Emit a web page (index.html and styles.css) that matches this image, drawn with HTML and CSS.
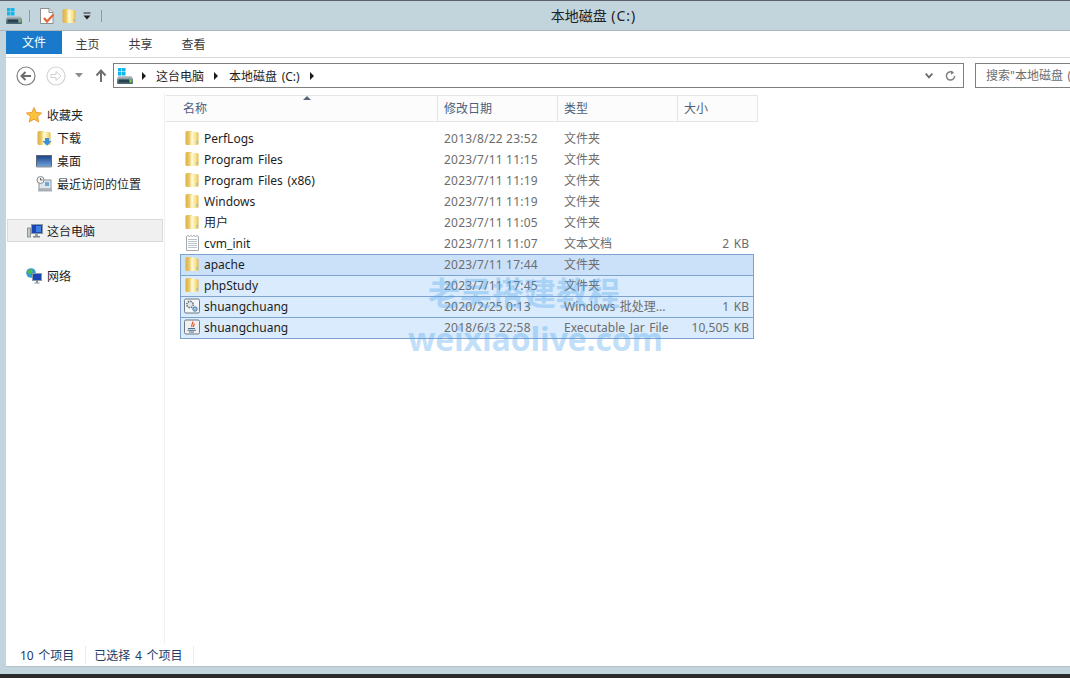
FILE: index.html
```html
<!DOCTYPE html>
<html lang="zh-CN">
<head>
    <meta charset="UTF-8">
    <title>本地磁盘 (C:)</title>
    <link rel="stylesheet" href="styles.css">
</head>
<body>
    <svg class="defs" width="0" height="0">
        <defs>
            <linearGradient id="foldLeft" x1="0" y1="0" x2="1" y2="0">
                <stop offset="0" stop-color="#dcae42"/>
                <stop offset="1" stop-color="#f6de86"/>
            </linearGradient>
            <linearGradient id="foldRight" x1="0" y1="0" x2="1" y2="0">
                <stop offset="0" stop-color="#fff6c4"/>
                <stop offset="0.6" stop-color="#f8e28c"/>
                <stop offset="1" stop-color="#e0b850"/>
            </linearGradient>
            <linearGradient id="driveBody" x1="0" y1="0" x2="0" y2="1">
                <stop offset="0" stop-color="#c6ced2"/>
                <stop offset="0.35" stop-color="#8a9aa2"/>
                <stop offset="1" stop-color="#46606e"/>
            </linearGradient>
            <linearGradient id="screen" x1="0" y1="0" x2="0" y2="1">
                <stop offset="0" stop-color="#1d3f86"/>
                <stop offset="1" stop-color="#6ea4df"/>
            </linearGradient>
            <symbol id="folder" viewBox="0 0 16 16">
                <path d="M1.500 2.500 Q1.500 1 3 1 H8 V15 H3 Q1.500 15 1.500 13.500 Z" fill="url(#foldLeft)"/>
                <path d="M8 2 H13 Q14.500 2 14.500 3.500 V13.500 Q14.500 15 13 15 H8 Z" fill="url(#foldRight)"/>
                <path d="M6.500 2 L9.500 1 V15 H6.500 Z" fill="#fdf6d2" opacity="0.8"/>
                <path d="M12.500 11 h1 v2.500 h-1 z" fill="#7fb2dc"/>
            </symbol>
            <symbol id="drive" viewBox="0 0 16 16">
                <rect x="1" y="0" width="3.500" height="3.500" fill="#10b6f0"/>
                <rect x="5" y="0" width="3.500" height="3.500" fill="#10b6f0"/>
                <rect x="1" y="4" width="3.500" height="3.500" fill="#10b6f0"/>
                <rect x="5" y="4" width="3.500" height="3.500" fill="#10b6f0"/>
                <path d="M1.500 8 H14.500 L16 11 V15 Q16 16 15 16 H1 Q0 16 0 15 V11 Z" fill="url(#driveBody)"/>
                <rect x="1.500" y="11.500" width="10.500" height="3" fill="#27434f"/>
                <rect x="13" y="11.500" width="1.500" height="3" fill="#6fd04a"/>
            </symbol>
        </defs>
    </svg>

    <div class="titlebar">
        <div class="quick">
            <svg class="ico16"><use href="#drive"/></svg>
            <span class="sep"></span>
            <svg class="ico16 q-prop" viewBox="0 0 16 16">
                <path d="M1.500 0.500 H10 L14 4.500 V15.500 H1.500 Z" fill="#fff" stroke="#8d8d8d"/>
                <path d="M10 0.500 V4.500 H14" fill="#e4e4e4" stroke="#8d8d8d"/>
                <path d="M5 10 L8 13.500 L14.500 6.500" fill="none" stroke="#e4693a" stroke-width="2.200"/>
            </svg>
            <svg class="ico16"><use href="#folder"/></svg>
            <svg class="q-arrow" viewBox="0 0 8 8" width="8" height="8">
                <rect x="0.500" y="0.500" width="7" height="1" fill="#222"/>
                <path d="M0.500 3.500 H7.500 L4 7.500 Z" fill="#222"/>
            </svg>
            <span class="sep"></span>
        </div>
        <div class="title">本地磁盘 <span class="title-drive">(C:)</span></div>
    </div>

    <div class="window">
        <div class="tabs">
            <div class="tab tab-file">文件</div>
            <div class="tab">主页</div>
            <div class="tab">共享</div>
            <div class="tab">查看</div>
        </div>

        <div class="navbar">
            <div class="nav-buttons">
                <svg class="nav-round" viewBox="0 0 20 20" width="20" height="20">
                    <circle cx="10" cy="10" r="9" fill="#fff" stroke="#7f7f7f" stroke-width="1.200"/>
                    <path d="M15 10 H6 M9.500 6 L5.500 10 L9.500 14" fill="none" stroke="#6d6d6d" stroke-width="2"/>
                </svg>
                <svg class="nav-round" viewBox="0 0 20 20" width="20" height="20">
                    <circle cx="10" cy="10" r="9" fill="#fff" stroke="#d4d4d4" stroke-width="1.200"/>
                    <path d="M5 8.500 H10 V5.500 L15 10 L10 14.500 V11.500 H5 Z" fill="#fff" stroke="#d0d0d0"/>
                </svg>
                <svg class="nav-drop" viewBox="0 0 8 5" width="8" height="5"><path d="M0 0 H8 L4 4.500 Z" fill="#8c8c8c"/></svg>
                <svg class="nav-up" viewBox="0 0 12 14" width="12" height="14">
                    <path d="M6 13 V2 M1.500 6.500 L6 1.500 L10.500 6.500" fill="none" stroke="#6f6f6f" stroke-width="2"/>
                </svg>
            </div>
            <div class="address">
                <svg class="ico16"><use href="#drive"/></svg>
                <span class="crumb-arrow"></span>
                <span class="crumb">这台电脑</span>
                <span class="crumb-arrow"></span>
                <span class="crumb">本地磁盘 (C:)</span>
                <span class="crumb-arrow"></span>
                <span class="address-fill"></span>
                <svg class="addr-chev" viewBox="0 0 8 6" width="8" height="6"><path d="M0.700 0.700 L4 4.300 L7.300 0.700" fill="none" stroke="#6a6a6a" stroke-width="1.800"/></svg>
                <svg class="addr-refresh" viewBox="0 0 12 12" width="11" height="12">
                    <path d="M8.500 2.200 A4.500 4.500 0 1 0 10.500 6" fill="none" stroke="#808080" stroke-width="1.600"/>
                    <path d="M6.500 0 L10 2.400 L6.500 4.500 Z" fill="#808080"/>
                </svg>
            </div>
            <div class="search">搜索"本地磁盘 (C:)"</div>
        </div>

        <div class="main">
            <aside class="sidebar">
                <div class="side-group">
                    <div class="side-item">
                        <svg class="ico16" viewBox="0 0 16 16">
                            <path d="M8 0.500 L10.200 5.500 L15.700 6 L11.500 9.600 L12.800 15 L8 12.200 L3.200 15 L4.500 9.600 L0.300 6 L5.800 5.500 Z" fill="#fbc23d" stroke="#e78a25" stroke-width="0.800"/>
                        </svg>
                        <span>收藏夹</span>
                    </div>
                    <div class="side-item side-sub">
                        <svg class="ico16" viewBox="0 0 16 16">
                            <use href="#folder"/>
                            <path d="M9 8 H13 V11 H15.500 L11 15.800 L6.500 11 H9 Z" fill="#3a8fd9"/>
                        </svg>
                        <span>下载</span>
                    </div>
                    <div class="side-item side-sub">
                        <svg class="ico16" viewBox="0 0 16 16">
                            <rect x="0.500" y="2.500" width="15" height="11" fill="url(#screen)" stroke="#5d6a75"/>
                            <rect x="0.500" y="13" width="15" height="1.500" fill="#8a96a0"/>
                        </svg>
                        <span>桌面</span>
                    </div>
                    <div class="side-item side-sub">
                        <svg class="ico16" viewBox="0 0 16 16">
                            <rect x="3" y="4" width="12" height="9" fill="#dfe6ea" stroke="#8a949b"/>
                            <rect x="9" y="6" width="4" height="4" fill="#6fa6d6"/>
                            <rect x="2" y="13" width="14" height="2.500" fill="#a9b1b6"/>
                            <circle cx="4.500" cy="4" r="3.500" fill="#f3f3f3" stroke="#8a8a8a"/>
                            <path d="M4.500 2 V4 H6.500" fill="none" stroke="#666"/>
                        </svg>
                        <span>最近访问的位置</span>
                    </div>
                </div>
                <div class="side-item side-pc">
                    <svg class="ico16" viewBox="0 0 16 16">
                        <rect x="0.500" y="5" width="3" height="9" fill="#c2c8c6" stroke="#6f7a72" stroke-width="0.700"/>
                        <rect x="4.500" y="1.500" width="11" height="9" fill="#1a45b5" stroke="#8b9aa3"/>
                        <rect x="9" y="3" width="5" height="6" fill="#3e7fe0"/>
                        <rect x="8" y="11" width="3" height="2" fill="#9aa5aa"/>
                        <rect x="6" y="13" width="7" height="1.500" fill="#7d888e"/>
                    </svg>
                    <span>这台电脑</span>
                </div>
                <div class="side-item side-net">
                    <svg class="ico16" viewBox="0 0 16 16">
                        <circle cx="5" cy="5" r="4.800" fill="#2f9adf"/>
                        <path d="M2 2.500 L5 1 L7 3 L4.500 6.500 L2 5 Z M6 7 L9 6.500 L8.500 9.500 L6.500 9.500 Z" fill="#57b947"/>
                        <rect x="6.500" y="5.500" width="9" height="7" fill="#1a45b5" stroke="#8b9aa3"/>
                        <rect x="10" y="12.500" width="2" height="2" fill="#7d888e"/>
                        <rect x="8.500" y="14.500" width="5" height="1" fill="#7d888e"/>
                    </svg>
                    <span>网络</span>
                </div>
            </aside>

            <section class="files">
                <div class="sort-mark"></div>
                <div class="col-head">
                    <div class="col col-name">名称</div>
                    <div class="col col-date">修改日期</div>
                    <div class="col col-type">类型</div>
                    <div class="col col-size">大小</div>
                </div>
                <div class="rows">
                    <div class="row"><svg class="ico16"><use href="#folder"/></svg><span class="c-name">PerfLogs</span><span class="c-date">2013/8/22 23:52</span><span class="c-type">文件夹</span><span class="c-size"></span></div>
                    <div class="row"><svg class="ico16"><use href="#folder"/></svg><span class="c-name">Program Files</span><span class="c-date">2023/7/11 11:15</span><span class="c-type">文件夹</span><span class="c-size"></span></div>
                    <div class="row"><svg class="ico16"><use href="#folder"/></svg><span class="c-name">Program Files (x86)</span><span class="c-date">2023/7/11 11:19</span><span class="c-type">文件夹</span><span class="c-size"></span></div>
                    <div class="row"><svg class="ico16"><use href="#folder"/></svg><span class="c-name">Windows</span><span class="c-date">2023/7/11 11:19</span><span class="c-type">文件夹</span><span class="c-size"></span></div>
                    <div class="row"><svg class="ico16"><use href="#folder"/></svg><span class="c-name">用户</span><span class="c-date">2023/7/11 11:05</span><span class="c-type">文件夹</span><span class="c-size"></span></div>
                    <div class="row">
                        <svg class="ico16" viewBox="0 0 16 16">
                            <path d="M2.500 1.500 L4 0.500 L5.500 1.500 L7 0.500 L8.500 1.500 L10 0.500 L11.500 1.500 L13 0.500 L14.500 1.500 V15.500 H2.500 Z" fill="#fff" stroke="#a3a8ac"/>
                            <path d="M4 4.500 H13 M4 6.500 H13 M4 8.500 H13 M4 10.500 H13 M4 12.500 H13" stroke="#b9c3cb"/>
                        </svg>
                        <span class="c-name">cvm_init</span><span class="c-date">2023/7/11 11:07</span><span class="c-type">文本文档</span><span class="c-size">2 KB</span>
                    </div>
                    <div class="row sel sel-hot"><svg class="ico16"><use href="#folder"/></svg><span class="c-name">apache</span><span class="c-date">2023/7/11 17:44</span><span class="c-type">文件夹</span><span class="c-size"></span></div>
                    <div class="row sel"><svg class="ico16"><use href="#folder"/></svg><span class="c-name">phpStudy</span><span class="c-date">2023/7/11 17:45</span><span class="c-type">文件夹</span><span class="c-size"></span></div>
                    <div class="row sel">
                        <svg class="ico16" viewBox="0 0 16 16">
                            <rect x="0.500" y="1" width="15" height="14" rx="1.500" fill="#f4f6f8" stroke="#6f7a84"/>
                            <circle cx="6" cy="6.500" r="3.200" fill="#dfe6ea" stroke="#68747e" stroke-width="1.600" stroke-dasharray="1.500 1"/>
                            <circle cx="11" cy="11" r="2.200" fill="#9fc4e6" stroke="#4d7ba6"/>
                        </svg>
                        <span class="c-name">shuangchuang</span><span class="c-date">2020/2/25 0:13</span><span class="c-type">Windows 批处理...</span><span class="c-size">1 KB</span>
                    </div>
                    <div class="row sel">
                        <svg class="ico16" viewBox="0 0 16 16">
                            <rect x="0.500" y="1" width="15" height="14" rx="1.500" fill="#eef0f2" stroke="#6f7a84"/>
                            <path d="M8.500 2.500 C10 4.500 6.500 5 8 8 M10 4.500 C11 6 9 6 9.500 8" fill="none" stroke="#e0582a" stroke-width="1.200"/>
                            <path d="M4 9.500 H11 M3.500 11.300 H12 M5 13 H10" stroke="#4d6f92" stroke-width="1.100"/>
                        </svg>
                        <span class="c-name">shuangchuang</span><span class="c-date">2018/6/3 22:58</span><span class="c-type">Executable Jar File</span><span class="c-size">10,505 KB</span>
                    </div>
                </div>
                <div class="watermark">
                    <div class="wm-cn">老吴搭建教程</div>
                    <div class="wm-en">weixiaolive.com</div>
                </div>
            </section>
        </div>

        <div class="statusbar">
            <span class="status-cell">10 个项目</span>
            <span class="status-cell">已选择 4 个项目</span>
        </div>
    </div>
    <div class="taskbar"></div>
</body>
</html>
```

FILE: styles.css
```css
html, body {
    margin: 0;
    padding: 0;
    height: 100%;
    overflow: hidden;
}
body {
    width: 1070px;
    height: 678px;
    display: flex;
    flex-direction: column;
    background-color: #c3d5dc;
    font-family: "Noto Sans", "Noto Sans CJK SC", sans-serif;
    font-size: 12px;
    word-spacing: 1.5px;
    color: #1e1e1e;
}
.defs {
    position: absolute;
}
.ico16 {
    width: 16px;
    height: 16px;
    flex: none;
}

/* title bar */
.titlebar {
    height: 31px;
    flex: none;
    border-top: 1px solid #5c6068;
    box-sizing: border-box;
    border-bottom: 1px solid #a9b7bd;
    display: flex;
    align-items: center;
    position: relative;
}
.quick {
    display: flex;
    align-items: center;
    padding-left: 6px;
}
.quick .sep {
    width: 1px;
    height: 12px;
    background-color: #8d9a9f;
    margin: 0 9px 0 7px;
}
.q-prop {
    margin-right: 6px;
}
.q-arrow {
    margin: 1px 3px 0 6px;
}
.title {
    position: absolute;
    left: 0;
    right: 0;
    padding-left: 117px;
    padding-bottom: 2px;
    text-align: center;
    font-size: 14px;
    word-spacing: 1px;
    color: #202020;
}
.title-drive {
    letter-spacing: 1px;
}

/* window */
.window {
    flex: 1;
    margin-left: 6px;
    margin-bottom: 7px;
    background-color: #fff;
    display: flex;
    flex-direction: column;
    min-height: 0;
    border-bottom: 1px solid #b8c0c4;
}
.tabs {
    height: 26px;
    flex: none;
    display: flex;
    border-bottom: 1px solid #dadada;
}
.tab {
    width: 53px;
    height: 23px;
    line-height: 27px;
    text-align: center;
    color: #3b3b3b;
}
.tab-file {
    width: 56px;
    line-height: 23px;
    margin-right: -1px;
    background-color: #1979ca;
    color: #fff;
}
.navbar {
    height: 35px;
    flex: none;
    display: flex;
    align-items: center;
}
.nav-buttons {
    display: flex;
    align-items: center;
    width: 107px;
    flex: none;
    padding-left: 10px;
    box-sizing: border-box;
}
.nav-round {
    margin-right: 10px;
}
.nav-drop {
    margin: 0 12px 0 -1px;
}
.address {
    flex: 1;
    height: 25px;
    box-sizing: border-box;
    border: 1px solid #7f7f7f;
    display: flex;
    align-items: center;
    padding: 0 7px 0 3px;
    color: #1e1e1e;
}
.crumb-arrow {
    width: 0;
    height: 0;
    border-left: 4px solid #1a1a1a;
    border-top: 4px solid transparent;
    border-bottom: 4px solid transparent;
    margin: 0 10px 0 9px;
}
.crumb + .crumb-arrow {
    margin: 0 11px 0 10px;
}
.address-fill {
    flex: 1;
}
.addr-chev {
    margin-right: 12px;
}
.search {
    width: 95px;
    height: 25px;
    line-height: 23px;
    box-sizing: border-box;
    flex: none;
    margin-left: 11px;
    border: 1px solid #7f7f7f;
    border-right: none;
    padding-left: 10px;
    color: #6d6d6d;
    white-space: nowrap;
    overflow: hidden;
}

/* sidebar */
.main {
    flex: 1;
    display: flex;
    min-height: 0;
}
.sidebar {
    width: 159px;
    flex: none;
    box-sizing: border-box;
    border-right: 1px solid #f0f0f0;
    padding-top: 10px;
    height: 551px;
}
.side-group {
    margin-bottom: 24px;
}
.side-item {
    height: 23px;
    display: flex;
    align-items: center;
    padding-left: 20px;
    gap: 5px;
    white-space: nowrap;
}
.side-sub {
    padding-left: 30px;
}
.side-pc {
    margin-left: 1px;
    width: 156px;
    padding-left: 19px;
    gap: 4px;
    box-sizing: border-box;
    background-color: #f0f0f0;
    border: 1px solid #d9d9d9;
}
.side-net {
    margin-top: 22px;
}

/* file list */
.files {
    flex: 1;
    position: relative;
    padding-top: 2px;
}
.sort-mark {
    position: absolute;
    left: 138px;
    top: 3px;
    width: 0;
    height: 0;
    border-left: 4px solid transparent;
    border-right: 4px solid transparent;
    border-bottom: 4px solid #56687a;
}
.col-head {
    margin-left: 1px;
    width: 592px;
    height: 27px;
    box-sizing: border-box;
    background-color: #fcfcfc;
    border-top: 1px solid #e5e5e5;
    border-bottom: 1px solid #e5e5e5;
    display: flex;
    color: #4c607a;
}
.col {
    box-sizing: border-box;
    line-height: 25px;
    padding-left: 6px;
    border-right: 1px solid #e5e5e5;
}
.col-name { width: 272px; padding-left: 17px; }
.col-date { width: 120px; }
.col-type { width: 120px; }
.col-size { width: 80px; }
.rows {
    padding-top: 6px;
    padding-left: 15px;
    width: 574px;
}
.row {
    height: 21px;
    display: flex;
    align-items: center;
    box-sizing: border-box;
    white-space: nowrap;
    padding-left: 3px;
    padding-bottom: 2px;
    border: 1px solid transparent;
    border-bottom-width: 0;
}
.row .ico16 {
    margin-right: 4px;
}
.c-name {
    width: 240px;
    flex: none;
    color: #1e1e1e;
}
.c-date {
    width: 120px;
    flex: none;
    letter-spacing: 0.2px;
    word-spacing: 0;
    color: #6d6d6d;
}
.c-type {
    width: 115px;
    flex: none;
    color: #6d6d6d;
    overflow: hidden;
}
.c-size {
    width: 70px;
    flex: none;
    text-align: right;
    color: #6d6d6d;
}
.sel {
    background-color: #d9ebfc;
    border-color: #7da2ce;
}
.sel:last-child {
    height: 22px;
    border-bottom-width: 1px;
}
.sel-hot {
    background-color: #cbe1fa;
}

/* site watermark over the list */
.watermark {
    position: absolute;
    left: 243px;
    top: 182px;
    width: 260px;
    color: #4ea3ee;
    opacity: 0.34;
    font-weight: 700;
    white-space: nowrap;
    pointer-events: none;
}
.wm-cn {
    font-size: 32px;
    line-height: 36px;
    padding-left: 20px;
}
.wm-en {
    font-size: 32px;
    line-height: 36px;
    letter-spacing: -0.15px;
    font-family: "Open Sans", sans-serif;
    margin-top: 10px;
}

/* status bar */
.statusbar {
    height: 24px;
    padding-top: 1px;
    box-sizing: border-box;
    flex: none;
    display: flex;
    align-items: center;
    color: #1e3a66;
    padding-left: 14px;
}
.status-cell {
    padding-right: 11px;
    margin-right: 8px;
    border-right: 1px solid #ececec;
}
.taskbar {
    height: 4px;
    flex: none;
    background-color: #2b2b2b;
}
```
